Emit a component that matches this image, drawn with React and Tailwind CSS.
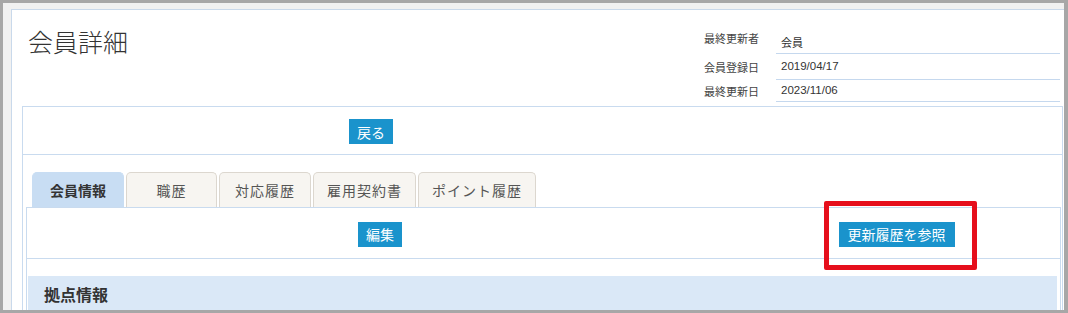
import React from "react";

const jp = { fontFamily: '"Noto Sans CJK JP", "Liberation Sans", sans-serif' };
const num = { fontFamily: '"Liberation Sans", "Noto Sans CJK JP", sans-serif' };

function Btn({ children, className = "" }) {
  return (
    <span
      className={`inline-flex items-center h-[25px] px-[8px] bg-[#1a93cc] text-white text-[14px] leading-none ${className}`}
    >
      {children}
    </span>
  );
}

const tabs = [
  { label: "会員情報", w: "w-[92px]", active: true },
  { label: "職歴", w: "w-[91px]" },
  { label: "対応履歴", w: "w-[92px]" },
  { label: "雇用契約書", w: "w-[103px]" },
  { label: "ポイント履歴", w: "w-[118px]" },
];

function App() {
  return (
    <div
      style={jp}
      className="w-[1068px] h-[313px] overflow-hidden bg-[#f1f1f1] border-[3px] border-r-[4px] border-[#a7a7a7] pt-[6px] pl-[8px]"
    >
      {/* Panel */}
      <div className="bg-white border border-r-0 border-[#c9d9eb] pl-[10px] pr-[1px] pb-[20px]">
        {/* Header */}
        <div className="flex h-[96px]">
          <h1 className="mt-[16px] ml-[6px] text-[25px] leading-[30px] font-light text-[#333]">
            会員詳細
          </h1>
          <div className="ml-auto mr-[3px] mt-[14px] w-[364px] text-[11px] text-[#444]">
            <div className="flex h-[30px]">
              <div className="w-[80px] pl-[8px] pt-[6px] leading-[16px]">最終更新者</div>
              <div className="flex-1 border-b border-[#c5d8ee] pl-[5px] pt-[10px] leading-[16px] text-[#333]">
                会員
              </div>
            </div>
            <div className="flex h-[26px]">
              <div className="w-[80px] pl-[8px] flex items-center">会員登録日</div>
              <div style={num} className="flex-1 border-b border-[#c5d8ee] pl-[5px] flex items-center text-[11.5px] text-[#333]">
                2019/04/17
              </div>
            </div>
            <div className="flex h-[22px]">
              <div className="w-[80px] pl-[8px] flex items-center">最終更新日</div>
              <div style={num} className="flex-1 border-b border-[#c5d8ee] pl-[5px] flex items-center text-[11.5px] text-[#333]">
                2023/11/06
              </div>
            </div>
          </div>
        </div>

        {/* Outer container */}
        <div className="border border-[#c9dbef] pl-[3px] pr-[1px]">
          <div className="grid grid-cols-[696px_1fr] h-[48px] border-b border-[#c9dbef] -ml-[3px] -mr-[1px]">
            <div className="flex items-center justify-center pt-[2px]">
              <Btn>戻る</Btn>
            </div>
            <div />
          </div>

          {/* Tabs */}
          <div className="flex gap-[2px] ml-[6px] mt-[17px]">
            {tabs.map((t) => (
              <div
                key={t.label}
                className={`${t.w} h-[35px] flex items-center justify-center rounded-t-[5px] border border-b-0 text-[14px] ${
                  t.active
                    ? "bg-[#c8ddf3] border-[#c8ddf3] font-bold text-[#333]"
                    : "bg-[#f7f5f1] border-[#dcd7cf] text-[#555] tracking-[1px]"
                }`}
              >
                {t.label}
              </div>
            ))}
          </div>

          {/* Tab content */}
          <div className="border border-[#c9dbef]">
            <div className="grid grid-cols-[706px_1fr] h-[51px] border-b border-[#c9dbef]">
              <div className="flex items-center justify-center pt-[2px]">
                <Btn>編集</Btn>
              </div>
              <div className="flex items-center justify-center pt-[2px]">
                <div className="relative">
                  <Btn className="px-[9px]">更新履歴を参照</Btn>
                  <div className="absolute -left-[15px] -right-[22px] -top-[20px] -bottom-[23px] border-[5px] border-[#e60f1c] rounded-[2px]" />
                </div>
              </div>
            </div>
            <div className="h-[17px]" />
            <div className="ml-[1px] mr-[3px] h-[36px] bg-[#dae8f7] flex items-center pl-[16px] text-[16px] font-bold text-[#333]">
              拠点情報
            </div>
            <div className="h-[10px]" />
          </div>
        </div>
      </div>
    </div>
  );
}

export default App;
